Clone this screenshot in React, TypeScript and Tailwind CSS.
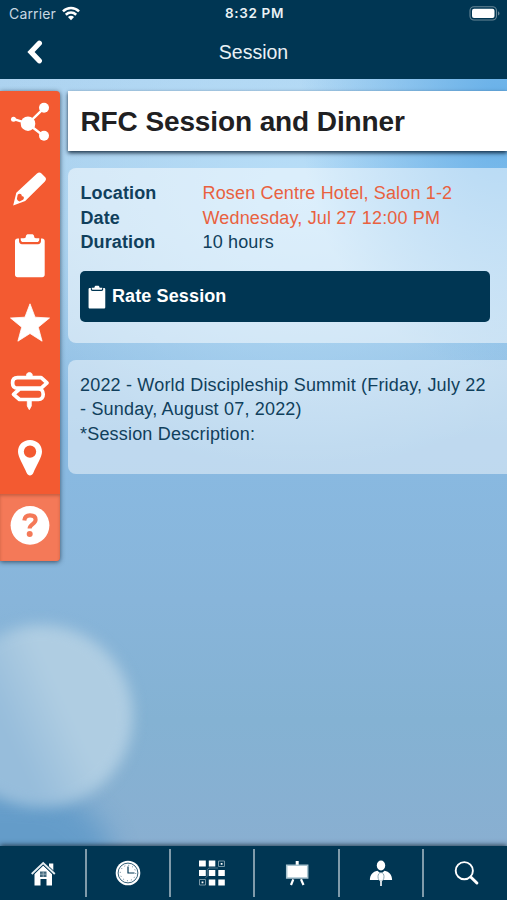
import type { ReactNode } from "react";

const ClipboardShape = () => (
    <>
        <path d="M17.5 13.500H19v2.500c0 2 1.200 3.200 3 3.200h16c1.800 0 3-1.200 3-3.200v-2.500h1.200c1.500 0 2.500 1 2.500 2.500v33.700c0 1.500-1 2.500-2.500 2.500h-24.700c-1.500 0-2.500-1-2.500-2.500V16c0-1.500 1-2.500 2.500-2.500z"/>
        <path d="M20.700 13.200h3.300c1.500 0 1.700-.8 1.900-2 .3-1.400 1-2 2.500-2h3.200c1.500 0 2.200.6 2.500 2 .2 1.200.4 2 1.900 2h3.300v1c0 1.800-.9 2.900-2.600 2.900H23.300c-1.700 0-2.600-1.100-2.600-2.900z"/>
    </>
);

const ShareIcon = () => (
    <>
        <path d="M14 29l14 4.500L44 18M28 33.500L44 46" transform="translate(0 -.8)" fill="none" stroke="currentColor" strokeWidth="2.400"/>
        <circle cx="13.500" cy="28.300" r="2.500"/>
        <circle cx="28" cy="32.700" r="7.300"/>
        <circle cx="44" cy="16.800" r="5"/>
        <circle cx="44" cy="44.800" r="5"/>
    </>
);

const PencilIcon = () => (
    <>
        <path d="M16.300 34.700L37 15.500c1.500-1.400 3-1.500 4.500-.1l3.500 3.600c1.400 1.500 1.300 3-.1 4.400L25.200 43 13.200 47.500z"/>
        <path d="M18 37.500c1.800-2 4.700-.4 4 1.600 2.300-.2 3 2 1.300 3.400l-3.500 1.800c-1.300-.3-2.200-1.300-2.600-2.700z" transform="translate(-.3 -.8)" fill="#f35a31"/>
    </>
);

const StarIcon = () => (
    <path d="M30 11.800l5.100 13.400 14.400.8-11.200 9.200 3.800 14L30 41.500l-12.100 7.700 3.800-14L10.500 26l14.400-.8z" strokeWidth=".8" stroke="currentColor" strokeLinejoin="round"/>
);

const SignsIcon = () => (
    <g fill="none" stroke="currentColor" strokeWidth="3.700" strokeLinejoin="round">
        <path d="M17.500 17.700h23.700l5.800 5.200-5.800 5.200H17.500c-3.300 0-4.900-2-4.900-5.200s1.600-5.200 4.900-5.200z"/>
        <path d="M38.500 29H19.500l-6 5.300 6 5.200h19c3 0 4.700-2.200 4.700-5.200s-1.700-5.300-4.700-5.300z"/>
        <path d="M26.500 17v-1.700c0-3.800 5.800-3.800 5.800 0V17zM27.300 40v6l2 3.700 2-3.700v-6z" fill="currentColor" strokeWidth=".8"/>
    </g>
);

const PinIcon = () => (
    <path fillRule="evenodd" d="M30 13c7 0 12 5 12 11.700 0 5.300-5.600 13.500-8.700 21.300-1.300 3.300-5.300 3.300-6.600 0C23.600 38.200 18 30 18 24.700 18 18 23 13 30 13zm0 5.400a6.200 6.200 0 100 12.400 6.200 6.200 0 000-12.400z"/>
);

const HelpIcon = () => (
    <>
        <circle cx="30" cy="31.300" r="19.400"/>
        <path d="M24.300 26.500c.4-3.400 2.300-5.100 5.700-5.100s5.600 1.600 5.600 4.400c0 4.400-6 4.200-6 8.700" fill="none" stroke="#f47958" strokeWidth="4.100"/>
        <circle cx="29.700" cy="40" r="3" fill="#f47958"/>
    </>
);

const sideItems = [
    { label: "Share", icon: <ShareIcon/> },
    { label: "Notes", icon: <PencilIcon/> },
    { label: "Survey", icon: <ClipboardShape/> },
    { label: "Favorite", icon: <StarIcon/> },
    { label: "Directions", icon: <SignsIcon/> },
    { label: "Map", icon: <PinIcon/> },
    { label: "Help", icon: <HelpIcon/> },
];

const HomeIcon = () => (
    <>
        <path d="M20 4.500h4.300v9L20 9zM5.500 15L14.200 6.500 23 15v11.500h-5.500v-6.500h-6v6.500h-6z"/>
        <path d="M3 14.800L14.200 4l11.300 10.800" fill="none" stroke="#003653" strokeWidth="3.400"/>
        <path d="M2.700 15L14.200 4l11.600 11" fill="none" stroke="#e5edf1" strokeWidth="1.900"/>
        <path d="M11 12.500h6.500V18H11z" fill="#41677c"/>
        <path d="M14.200 12.500V18M11 15.200h6.500" stroke="#b9cad3" strokeWidth=".7"/>
    </>
);

const ClockIcon = () => (
    <>
        <circle cx="14" cy="14" r="12.300"/>
        <circle cx="14" cy="14" r="9.900" fill="none" stroke="#003653" strokeWidth=".8"/>
        <circle cx="14" cy="14" r="7.700" fill="none" stroke="#54788b" strokeWidth="1" strokeDasharray="1 3.030"/>
        <path d="M14 7.500V14h6.500" fill="none" stroke="#003653" strokeWidth="1.200"/>
    </>
);

const GridIcon = () => (
    <>
        <path d="M1 1.500h6.800v6H1zM10.800 1.500h6.500v6h-6.500zM1 11h6.800v6H1zM10.800 11h6.500v6h-6.500zM20.300 11h6.500v6h-6.500zM10.800 20.500h6.500v6h-6.500zM20.300 20.500h6.500v6h-6.500z"/>
        <g fill="none" stroke="#7896a5" strokeWidth="1">
            <path d="M20.500 2h6v5.500h-6zM1.500 20.500h6V26h-6z"/>
            <path d="M20 9h-9l-1.800 1.700v6.500l-2 2" stroke="#4f7589"/>
        </g>
        <path d="M22.700 3.900h1.800v1.800h-1.800zM3.600 22.500h1.800v1.800H3.600z"/>
    </>
);

const BoardIcon = () => (
    <>
        <path d="M12.700 2h3v4h-3z"/>
        <path d="M3.700 6.300h21v12.700h-21z" stroke="#a9c4cf" strokeWidth="1.500"/>
        <path d="M10.300 20.300L8 26M18 20.300l2.500 5.700" stroke="currentColor" strokeWidth="2.200"/>
    </>
);

const SpeakerIcon = () => (
    <>
        <ellipse cx="14" cy="6.500" rx="4.200" ry="4.900"/>
        <path d="M2.900 21c0-5 3-8.500 7.500-9.300l3.600 3 3.600-3c4.500.8 7.500 4.300 7.500 9.300z"/>
        <path d="M14 13.500c2 0 3 2 3 4.200 0 2.400-1.200 4.500-3 4.500s-3-2.100-3-4.500c0-2.200 1-4.200 3-4.200z" stroke="#7293a2" strokeWidth=".8"/>
        <path d="M14 22v5" stroke="currentColor" strokeWidth="1.600"/>
    </>
);

const SearchIcon = () => (
    <g fill="none" stroke="currentColor">
        <circle cx="12.300" cy="11.700" r="8.600" strokeWidth="1.900"/>
        <path d="M18.300 17.800l1.500 1.500" strokeWidth="1.900"/>
        <path d="M19.500 18.700l5.400 5.300" strokeWidth="3" strokeLinecap="round"/>
    </g>
);

const tabs = [
    { label: "Home", icon: <HomeIcon/> },
    { label: "Schedule", icon: <ClockIcon/> },
    { label: "Menu", icon: <GridIcon/> },
    { label: "Sessions", icon: <BoardIcon/> },
    { label: "Speakers", icon: <SpeakerIcon/> },
    { label: "Search", icon: <SearchIcon/> },
];

const Header = () => (
    <header className="relative h-[79px] shrink-0 bg-[#003653] text-[#eaf1f5]">
        <div className="grid grid-cols-3 items-center h-[27px] pl-[9px] pr-[7px]">
            <div className="flex items-center gap-[6px] font-['Inter'] text-[14px] tracking-[0.150px] text-[#c8d8e2]">
                Carrier
                <svg width="18" height="15" viewBox="0 0 19 15" fill="none" stroke="white" strokeWidth="2.700">
                    <path d="M1 5.200c5-4.600 12-4.600 17 0M4 8.800c3.300-3 7.700-3 11 0"/>
                    <path d="M6.300 11.200c2-1.700 4.400-1.700 6.400 0L9.500 14.500z" fill="white" stroke="none"/>
                </svg>
            </div>
            <div className="text-center font-['Inter'] text-[13.500px] font-semibold tracking-[0.650px] whitespace-nowrap">8:32 PM</div>
            <svg className="justify-self-end" width="31" height="15" viewBox="0 0 31 15">
                <rect x="1" y=".7" width="26.500" height="13.300" rx="4" fill="none" stroke="#688797" strokeWidth="1.100"/>
                <rect x="3" y="2.700" width="22.500" height="9.300" rx="2" fill="white"/>
                <path d="M29 5.200c2 .8 2 3.500 0 4.300z" fill="#688797"/>
            </svg>
        </div>
        <div className="grid grid-cols-3 items-center h-[52px]">
            <button className="pl-[27px] pb-[2px]" aria-label="Back">
                <svg width="16" height="24" viewBox="0 0 16 24" fill="none" stroke="white" strokeWidth="5.300">
                    <path d="M12.300 3.200L4 12l8.300 8.800" strokeLinecap="round"/>
                </svg>
            </button>
            <h1 className="text-center text-[19.500px]">Session</h1>
        </div>
    </header>
);

const SideBar = () => (
    <nav className="flex flex-col w-[60px] h-[470px] shrink-0 overflow-hidden rounded-r-[4px] bg-[#f35a31] text-white shadow-[0_1px_5px_rgba(30,50,70,0.8)]">
        {sideItems.map((item) => (
            <button key={item.label} aria-label={item.label}
                className="flex-1 min-h-0 last:bg-[#f47958] last:shadow-[inset_0_2px_3px_rgba(120,50,30,0.35)]">
                <svg width="60" height="67" viewBox="0 0 60 67" fill="currentColor">{item.icon}</svg>
            </button>
        ))}
    </nav>
);

const Row = ({ label, children }: { label: string; children: ReactNode }) => (
    <div className="flex">
        <dt className="w-[122px] font-bold tracking-[0.120px]">{label}</dt>
        <dd>{children}</dd>
    </div>
);

const App = () => {
    return (
        <div className="relative isolate flex flex-col w-full h-screen overflow-hidden bg-[#89b4d7] bg-[radial-gradient(ellipse_200px_260px_at_500px_110px,#65afe8_0%,#65afe800_100%),radial-gradient(ellipse_330px_270px_at_300px_200px,#b8def8_0%,#b8def800_100%),linear-gradient(180deg,#add3f0_79px,#a6cdea_230px,#89bae2_440px,#88b5da_600px,#84b2d3_720px,#89afd1_846px)] font-['Liberation_Sans',sans-serif] text-[#103f5c]">
            <div className="absolute -z-10 -left-[100px] top-[790px] w-[215px] h-[160px] rounded-full bg-[#5c98c8] opacity-80 blur-[14px]"></div>
            <div className="absolute -z-10 -left-[50px] top-[625px] w-[183px] h-[182px] rounded-full bg-[linear-gradient(65deg,#97bddb_35%,#afcde2_60%)] blur-[7px]"></div>

            <Header/>

            <main className="flex flex-1 min-h-0 gap-2 pt-3">
                <SideBar/>
                <div className="flex-1 min-w-0">
                    <div className="flex items-center h-[60px] pl-[12.500px] pt-[2px] bg-white text-[#202022] shadow-[0_2px_4px_rgba(0,20,40,0.85)]">
                        <h2 className="text-[28px] tracking-[-0.110px] font-bold whitespace-nowrap">RFC Session and Dinner</h2>
                    </div>

                    <section className="h-[175px] mt-[17px] pt-[13px] pl-[12px] pr-[17px] rounded-l-[8px] bg-white/50">
                        <dl className="pl-[0.500px] text-[18px] leading-[24.500px] tracking-[0.160px] whitespace-nowrap">
                            <Row label="Location"><span className="text-[#e9613f]">Rosen Centre Hotel, Salon 1-2</span></Row>
                            <Row label="Date"><span className="text-[#e9613f]">Wednesday, Jul 27 12:00 PM</span></Row>
                            <Row label="Duration">10 hours</Row>
                        </dl>
                        <button className="flex items-center w-full h-[51px] mt-[16.500px] pl-[8px] gap-[6px] rounded-[5px] bg-[#003653] text-[18px] tracking-[0.120px] font-bold text-white">
                            <svg width="18" height="24" viewBox="14 8 32 45" preserveAspectRatio="none" fill="currentColor"><ClipboardShape/></svg>
                            Rate Session
                        </button>
                    </section>

                    <section className="h-[114px] mt-[17px] pt-[12.500px] pl-[12px] rounded-l-[8px] bg-white/46 text-[18px] leading-[24.500px] tracking-[0.190px] whitespace-nowrap">
                        <p>2022 - World Discipleship Summit (Friday, July 22<br/>- Sunday, August 07, 2022)</p>
                        <p>*Session Description:</p>
                    </section>
                </div>
            </main>

            <nav className="grid grid-cols-[87px_84px_84px_85px_84px_83px] h-[54px] shrink-0 py-[3px] bg-[#003653] text-white shadow-[0_-1px_5px_rgba(30,50,65,0.9)]">
                {tabs.map((tab) => (
                    <button key={tab.label} aria-label={tab.label}
                        className="flex items-center justify-center border-r-2 border-[#809baa] last:border-r-0">
                        <svg width="28" height="28" viewBox="0 0 28 28" fill="currentColor">{tab.icon}</svg>
                    </button>
                ))}
            </nav>
        </div>
    );
}

export default App;
